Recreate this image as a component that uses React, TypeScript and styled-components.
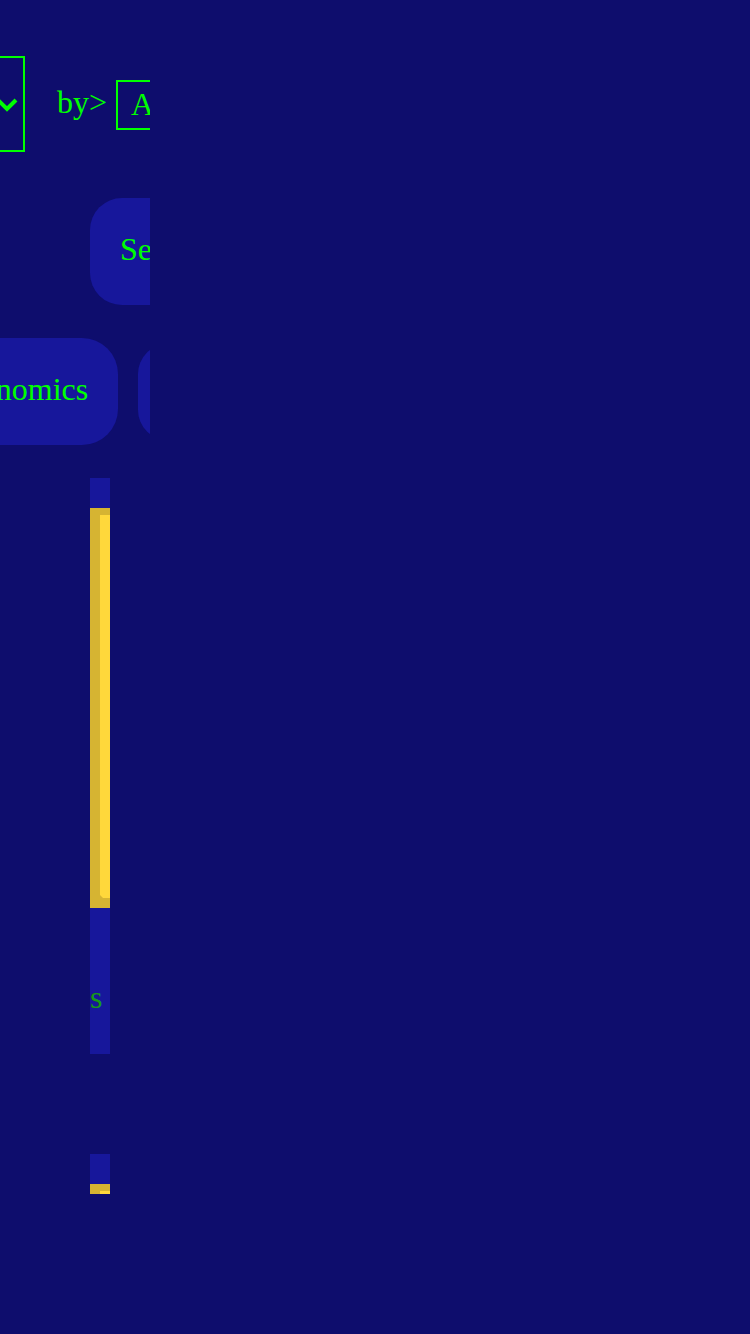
import styled, { createGlobalStyle } from "styled-components"

const GlobalStyle = createGlobalStyle`
  html, body {
    margin: 0;
    padding: 0;
    background: #0e0d6d;
  }
  body {
    font-family: "Liberation Serif", "Times New Roman", serif;
    color: #00ff00;
  }
`

const Page = styled.div`
  width: 750px;
  height: 1334px;
  background: #0e0d6d;
  overflow: hidden;
`

const Frame = styled.div`
  width: 150px;
  overflow: hidden;
  display: flex;
  flex-direction: column;
`

const Toolbar = styled.div`
  display: flex;
  align-items: center;
  margin-top: 56px;
  margin-left: -95px;
`

const Select = styled.div`
  flex: none;
  box-sizing: border-box;
  width: 120px;
  height: 96px;
  border: 2px solid #00ff00;
  display: flex;
  align-items: center;
  justify-content: flex-end;
  padding-right: 5px;
  padding-top: 2px;
`

const Label = styled.span`
  flex: none;
  margin-left: 32px;
  margin-bottom: 4px;
  font-size: 32px;
  white-space: nowrap;
`

const Input = styled.div`
  flex: none;
  box-sizing: border-box;
  width: 240px;
  height: 50px;
  margin-left: 9px;
  margin-top: 2px;
  border: 2px solid #00ff00;
  padding-left: 13px;
  font-size: 32px;
  line-height: 44px;
`

const Row = styled.div<{ $top: number; $left: number }>`
  display: flex;
  align-items: center;
  gap: 20px;
  margin-top: ${(p) => p.$top}px;
  margin-left: ${(p) => p.$left}px;
`

const Pill = styled.div<{ $h: number; $r: number; $w?: number }>`
  flex: none;
  box-sizing: border-box;
  height: ${(p) => p.$h}px;
  ${(p) => (p.$w ? `width: ${p.$w}px;` : "")}
  border-radius: ${(p) => p.$r}px;
  background: #17179b;
  padding: 0 30px 4px;
  display: flex;
  align-items: center;
  font-size: 32px;
  white-space: nowrap;
`

const Card = styled.div<{ $top: number; $h: number }>`
  box-sizing: border-box;
  width: 20px;
  height: ${(p) => p.$h}px;
  margin-top: ${(p) => p.$top}px;
  margin-left: 90px;
  padding-top: 30px;
  background: #17179b;
  overflow: hidden;
`

const Cover = styled.div`
  height: 400px;
  background: #d6b432;
  display: flex;
  padding: 7px 0 10px 10px;
  box-sizing: border-box;
`

const CoverFace = styled.div`
  flex: 1;
  background: #ffd83b;
  clip-path: polygon(0 0, 100% 0, 100% 100%, 3px 100%, 0 calc(100% - 3px));
`

const Title = styled.div`
  margin-top: 71px;
  font-size: 32px;
  line-height: 37px;
  color: #169c16;
  white-space: nowrap;
`

export default function App() {
  return (
    <Page>
      <GlobalStyle />
      <Frame>
        <Toolbar>
          <Select>
            <svg width="22" height="14" viewBox="0 0 22 14" aria-hidden>
              <polyline
                points="2,2 11,11 20,2"
                fill="none"
                stroke="#00ff00"
                strokeWidth="4"
                strokeLinecap="butt"
              />
            </svg>
          </Select>
          <Label>by&gt;</Label>
          <Input>A</Input>
        </Toolbar>
        <Row $top={46} $left={90}>
          <Pill $h={107} $r={32} $w={200}>Se</Pill>
        </Row>
        <Row $top={33} $left={-84}>
          <Pill $h={107} $r={36}>Economics</Pill>
          <Pill $h={96} $r={30} $w={150} />
        </Row>
        <Card $top={33} $h={576}>
          <Cover>
            <CoverFace />
          </Cover>
          <Title>s</Title>
        </Card>
        <Card $top={100} $h={40}>
          <Cover>
            <CoverFace />
          </Cover>
        </Card>
      </Frame>
    </Page>
  )
}
